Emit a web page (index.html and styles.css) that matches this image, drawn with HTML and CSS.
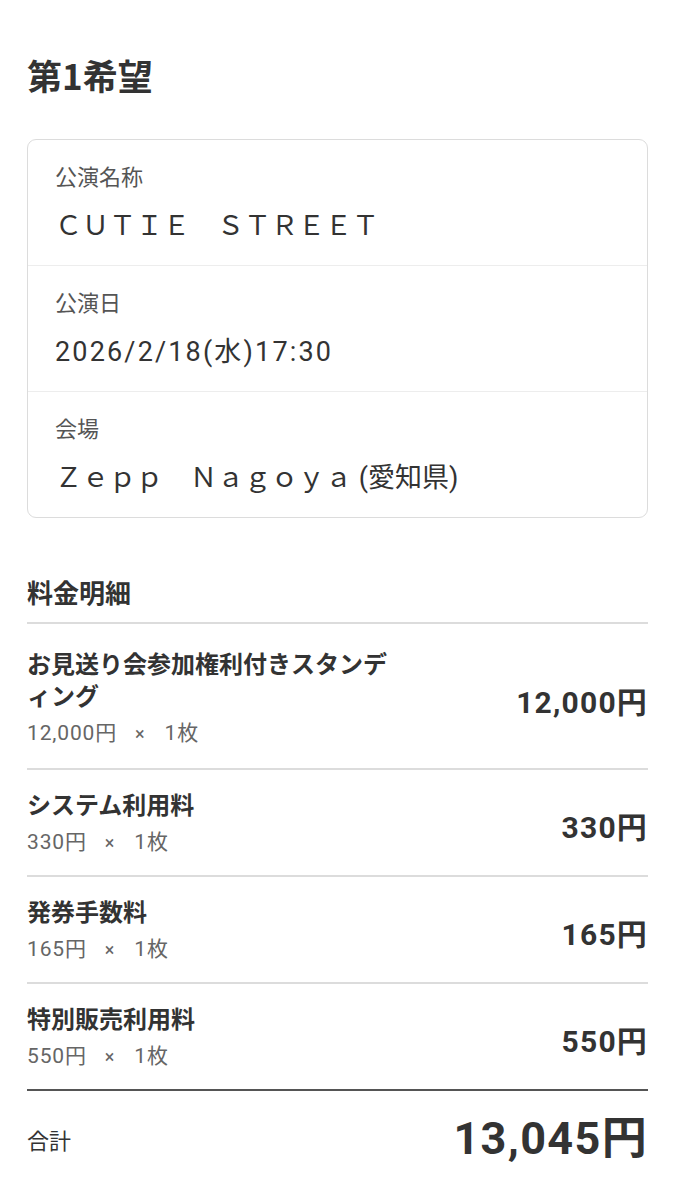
FILE: index.html
```html
<!DOCTYPE html>
<html lang="ja">
<head>
    <meta charset="UTF-8">
    <meta name="viewport" content="width=device-width, initial-scale=1.0">
    <title>第1希望</title>
    <link rel="stylesheet" href="styles.css">
</head>
<body>
    <main class="page">
        <h1 class="title">第1希望</h1>

        <section class="card">
            <div class="card-row">
                <p class="card-label">公演名称</p>
                <p class="card-value">ＣＵＴＩＥ　ＳＴＲＥＥＴ</p>
            </div>
            <div class="card-row">
                <p class="card-label">公演日</p>
                <p class="card-value date">2026/2/18(水)17:30</p>
            </div>
            <div class="card-row">
                <p class="card-label">会場</p>
                <p class="card-value">Ｚｅｐｐ　Ｎａｇｏｙａ (愛知県)</p>
            </div>
        </section>

        <section class="fees">
            <h2 class="fees-title">料金明細</h2>

            <div class="fee first">
                <div class="fee-info">
                    <p class="fee-name">お見送り会参加権利付きスタンディング</p>
                    <p class="fee-sub">12,000円<span class="times">×</span>1枚</p>
                </div>
                <p class="fee-price">12,000円</p>
            </div>

            <div class="fee">
                <div class="fee-info">
                    <p class="fee-name">システム利用料</p>
                    <p class="fee-sub">330円<span class="times">×</span>1枚</p>
                </div>
                <p class="fee-price">330円</p>
            </div>

            <div class="fee">
                <div class="fee-info">
                    <p class="fee-name">発券手数料</p>
                    <p class="fee-sub">165円<span class="times">×</span>1枚</p>
                </div>
                <p class="fee-price">165円</p>
            </div>

            <div class="fee last">
                <div class="fee-info">
                    <p class="fee-name">特別販売利用料</p>
                    <p class="fee-sub">550円<span class="times">×</span>1枚</p>
                </div>
                <p class="fee-price">550円</p>
            </div>

            <div class="total">
                <p class="total-label">合計</p>
                <p class="total-price">13,045円</p>
            </div>
        </section>
    </main>
</body>
</html>
```

FILE: styles.css
```css
body{
    margin: 0;
    background-color: #fff;
    color: #333;
    font-family: Roboto, "Noto Sans CJK JP", sans-serif;
}

p, h1, h2{
    margin: 0;
}

.page{
    padding: 51px 27px 40px;
}

.title{
    font-family: "Noto Sans CJK JP", sans-serif;
    font-size: 35px;
    font-weight: bold;
    line-height: 48px;
    margin-bottom: 40px;
}

.card{
    border: 1.5px solid #dcdcdc;
    border-radius: 9px;
}

.card-row{
    padding: 21px 27px 19px;
    border-bottom: 1.5px solid #ededed;
}

.card-row:last-child{
    border-bottom: none;
}

.card-label{
    font-size: 22px;
    line-height: 33px;
    color: #555;
    margin-bottom: 12px;
}

.card-value{
    font-size: 27px;
    line-height: 40px;
    color: #333;
}

.card-value.date{
    letter-spacing: 0.08em;
}

.fees{
    margin-top: 57px;
}

.fees-title{
    font-size: 26px;
    font-weight: bold;
    line-height: 39px;
    padding-bottom: 8px;
    border-bottom: 2px solid #dcdcdc;
}

.fee{
    display: flex;
    justify-content: space-between;
    align-items: center;
    padding: 20px 0 16px;
    border-bottom: 2px solid #dcdcdc;
}

.fee.first{
    padding-top: 25px;
    padding-bottom: 18px;
}

.fee.last{
    border-bottom-color: #555;
}

.fee-info{
    max-width: 372px;
}

.fee-name{
    font-size: 24px;
    font-weight: bold;
    line-height: 32px;
    margin-bottom: 4px;
}

.fee-sub{
    font-size: 21px;
    line-height: 32px;
    color: #666;
    letter-spacing: 0.04em;
}

.times{
    font-size: 18px;
    margin: 0 19px 0 18px;
}

.fee-price{
    font-size: 30px;
    font-weight: bold;
    letter-spacing: 0.04em;
    white-space: nowrap;
}

.total{
    display: flex;
    justify-content: space-between;
    align-items: center;
    padding-top: 18px;
}

.total-label{
    font-size: 22px;
}

.total-price{
    font-size: 45px;
    font-weight: bold;
    line-height: 60px;
    letter-spacing: 0.03em;
}
```
